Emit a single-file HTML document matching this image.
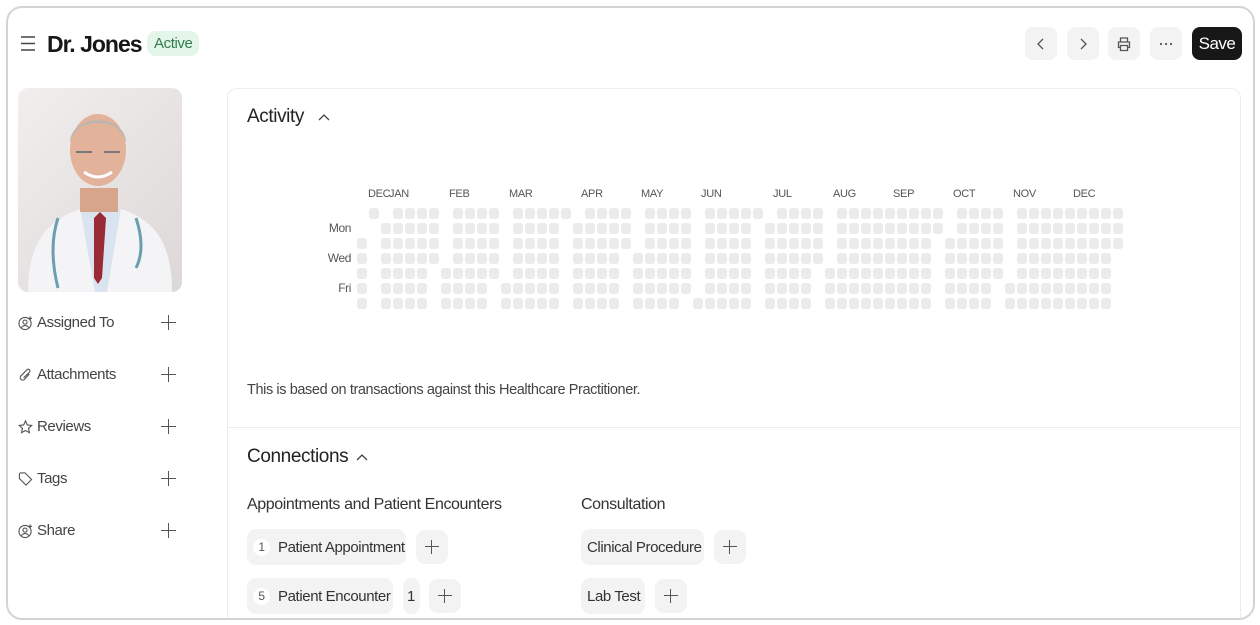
<!DOCTYPE html>
<html style="width:1260px;height:625px;overflow:hidden"><head><meta charset="utf-8"><style>
*{box-sizing:border-box;margin:0;padding:0}
body{width:1260px;height:625px;background:#fff;font-family:"Liberation Sans",sans-serif;color:#333;position:relative;overflow:hidden;letter-spacing:-0.4px}
.frame{position:absolute;left:6px;top:6px;width:1249px;height:614px;border:2px solid #d4d4d4;border-radius:16px;z-index:5}
.abs{position:absolute;white-space:nowrap}
.btn{position:absolute;top:27px;width:32px;height:33px;background:#f3f3f3;border-radius:8px;display:flex;align-items:center;justify-content:center}
.side{position:absolute;left:18px;font-size:15px;color:#444;display:flex;align-items:center;gap:4px}
.plus{position:absolute;left:161px;width:15px;height:15px}
.plus:before,.plus:after{content:"";position:absolute;background:#555}
.plus:before{left:7px;top:0;width:1.3px;height:15px}
.plus:after{top:7px;left:0;height:1.3px;width:15px}
.pill{position:absolute;height:36px;background:#f3f3f3;border-radius:9px;font-size:15px;color:#333;display:flex;align-items:center;padding:0 6px;white-space:nowrap}
.num{display:inline-block;width:17px;height:17px;border-radius:50%;background:#fff;font-size:12px;text-align:center;line-height:17px;margin-right:8px;color:#555;flex:none}
.pl{position:absolute;width:32px;height:34px;background:#f3f3f3;border-radius:9px}
.pl i{position:absolute;left:9px;top:10px;width:14px;height:14px}
.pl i:before,.pl i:after{content:"";position:absolute;background:#555}
.pl i:before{left:6px;top:0;width:1.3px;height:14px}
.pl i:after{top:6px;left:0;height:1.3px;width:14px}
.c{position:absolute;width:10px;height:11px;background:#ebebeb;border-radius:3px}
.ml{position:absolute;top:188px;font-size:11px;color:#555;letter-spacing:-0.3px}
.dl{position:absolute;font-size:12px;color:#555;text-align:right;width:40px;left:311px}
</style></head><body>
<div class="frame"></div>
<svg class="abs" style="left:20px;top:35px" width="16" height="17" viewBox="0 0 16 17"><path d="M1 2h14M1 8.5h14M1 15h14" stroke="#444" stroke-width="1.4"/></svg>
<div class="abs" style="left:47px;top:31px;font-size:23px;font-weight:bold;color:#171717;letter-spacing:-1px">Dr. Jones</div>
<div class="abs" style="left:147px;top:31px;height:25px;padding:0 7px;background:#e4f5e9;border-radius:9px;font-size:15px;color:#2f7d4d;line-height:25px">Active</div>
<div class="btn" style="left:1025px"><svg width="12" height="14"><path d="M8 2L3 7l5 5" stroke="#555" fill="none" stroke-width="1.3"/></svg></div>
<div class="btn" style="left:1067px"><svg width="12" height="14"><path d="M4 2l5 5-5 5" stroke="#555" fill="none" stroke-width="1.3"/></svg></div>
<div class="btn" style="left:1108px"><svg width="16" height="16" viewBox="0 0 16 16"><path d="M4.5 6V2h7v4M4.5 11.5H2.5V6h11v5.5h-2M4.5 9.5h7v5h-7z" stroke="#555" fill="none" stroke-width="1.3"/></svg></div>
<div class="btn" style="left:1150px"><svg width="14" height="4"><circle cx="2" cy="2" r="1.1" fill="#555"/><circle cx="7" cy="2" r="1.1" fill="#555"/><circle cx="12" cy="2" r="1.1" fill="#555"/></svg></div>
<div class="btn" style="left:1192px;width:50px;background:#171717;color:#fff;font-size:17px;letter-spacing:-0.5px">Save</div>
<div class="abs" style="left:18px;top:88px;width:164px;height:204px;border-radius:10px;overflow:hidden;background:linear-gradient(135deg,#f2eeee,#dcd8d8)">
<svg width="164" height="204" viewBox="0 0 164 204">
<path d="M10 204c0-50 20-75 60-85h26c40 10 58 35 58 85z" fill="#f4f4f6"/>
<path d="M62 120l15 84h12l14-84z" fill="#d9e4f0"/>
<path d="M76 130l6-6 6 6-4 60-4 6-4-6z" fill="#9a2a35"/>
<path d="M62 100h38v24H62z" fill="#d7a48c"/>
<ellipse cx="80" cy="62" rx="28" ry="36" fill="#e2b29a"/>
<path d="M52 55c0-30 56-30 56 0-4-14-12-20-28-20s-24 6-28 20z" fill="#b8b6b4"/>
<path d="M58 64h16M86 64h16" stroke="#777" stroke-width="2"/>
<path d="M66 84q14 10 28 0" stroke="#fff" stroke-width="3" fill="none"/>
<path d="M40 130q-10 30 0 70M118 130q10 30 0 50" stroke="#6a9fb0" stroke-width="3" fill="none"/>
</svg></div>
<div class="side" style="top:314px"><svg width="15" height="16" viewBox="0 0 16 16"><circle cx="7.5" cy="8.5" r="6.5" stroke="#555" fill="none" stroke-width="1.2"/><circle cx="7.5" cy="7" r="2.2" stroke="#555" fill="none" stroke-width="1.2"/><path d="M3.5 13c2-3 6-3 8 0M13 1v4M11 3h4" stroke="#555" fill="none" stroke-width="1.2"/></svg>Assigned To</div><div class="plus" style="top:315px"></div>
<div class="side" style="top:366px"><svg width="15" height="16" viewBox="0 0 16 16"><path d="M12 7l-5 5.5a2.5 2.5 0 01-4-3.5L9.5 2.5a1.8 1.8 0 012.8 2.4L6 11" stroke="#555" fill="none" stroke-width="1.2"/></svg>Attachments</div><div class="plus" style="top:367px"></div>
<div class="side" style="top:418px"><svg width="15" height="16" viewBox="0 0 16 16"><path d="M8 1.5l2 4.3 4.6.5-3.4 3.2 1 4.6L8 11.8l-4.2 2.3 1-4.6L1.4 6.3 6 5.8z" stroke="#555" fill="none" stroke-width="1.2"/></svg>Reviews</div><div class="plus" style="top:419px"></div>
<div class="side" style="top:470px"><svg width="15" height="16" viewBox="0 0 16 16"><path d="M1.5 2.5v5l7 7 6-6-7-7h-5zM4.5 5.5h.1" stroke="#555" fill="none" stroke-width="1.2"/></svg>Tags</div><div class="plus" style="top:471px"></div>
<div class="side" style="top:522px"><svg width="15" height="16" viewBox="0 0 16 16"><circle cx="7.5" cy="8.5" r="6.5" stroke="#555" fill="none" stroke-width="1.2"/><circle cx="7.5" cy="7" r="2.2" stroke="#555" fill="none" stroke-width="1.2"/><path d="M3.5 13c2-3 6-3 8 0M13 1v4M11 3h4" stroke="#555" fill="none" stroke-width="1.2"/></svg>Share</div><div class="plus" style="top:523px"></div>
<div class="abs" style="left:227px;top:88px;width:1014px;height:531px;border:1px solid #ececec;border-bottom:none;border-radius:10px 10px 0 0"></div>
<div class="abs" style="left:227px;top:427px;width:1014px;height:1px;background:#ececec"></div>
<div class="abs" style="left:247px;top:106px;font-size:19px;color:#222">Activity</div>
<svg class="abs" style="left:318px;top:113px" width="12" height="9"><path d="M1 7l5-5 5 5" stroke="#444" fill="none" stroke-width="1.3"/></svg>
<div class="abs" style="left:247px;top:446px;font-size:19px;color:#222">Connections</div>
<svg class="abs" style="left:356px;top:453px" width="12" height="9"><path d="M1 7l5-5 5 5" stroke="#444" fill="none" stroke-width="1.3"/></svg>
<div class="abs" style="left:247px;top:382px;font-size:14.5px;color:#444">This is based on transactions against this Healthcare Practitioner.</div>
<div class="dl" style="top:221px">Mon</div><div class="dl" style="top:251px">Wed</div><div class="dl" style="top:281px">Fri</div>
<div id="hm"></div>
<div class="abs" style="left:247px;top:496px;font-size:16px;color:#333">Appointments and Patient Encounters</div>
<div class="abs" style="left:581px;top:496px;font-size:16px;color:#333">Consultation</div>
<div class="pill" style="left:247px;top:529px;width:159px"><span class="num">1</span>Patient Appointment</div>
<div class="pl" style="left:416px;top:530px"><i></i></div>
<div class="pill" style="left:247px;top:578px;width:146px"><span class="num">5</span>Patient Encounter</div>
<div class="pill" style="left:403px;top:578px;width:17px;padding:0 4px">1</div>
<div class="pl" style="left:429px;top:579px"><i></i></div>
<div class="pill" style="left:581px;top:529px;width:123px;padding:0 6px">Clinical Procedure</div>
<div class="pl" style="left:714px;top:530px"><i></i></div>
<div class="pill" style="left:581px;top:578px;width:64px">Lab Test</div>
<div class="pl" style="left:655px;top:579px"><i></i></div>
<script>
var hm=document.getElementById('hm'),h='';
var d=new Date(2023,11,26),end=new Date(2024,11,31);
var col=0,prevM=d.getMonth(),names=['JAN','FEB','MAR','APR','MAY','JUN','JUL','AUG','SEP','OCT','NOV','DEC'];
var x0=357;
h+='<div class="ml" style="left:368px">DEC</div>';
var first=true;
while(d<=end){
 var w=d.getDay(),m=d.getMonth();
 if(!first){ if(m!==prevM){col++; h+='<div class="ml" style="left:'+(x0+col*12+8)+'px">'+names[m]+'</div>';} else if(w===0) col++; }
 first=false;prevM=m;
 h+='<div class="c" style="left:'+(x0+col*12)+'px;top:'+(208+w*15)+'px"></div>';
 d.setDate(d.getDate()+1);
}
hm.innerHTML=h;
</script>
</body></html>
